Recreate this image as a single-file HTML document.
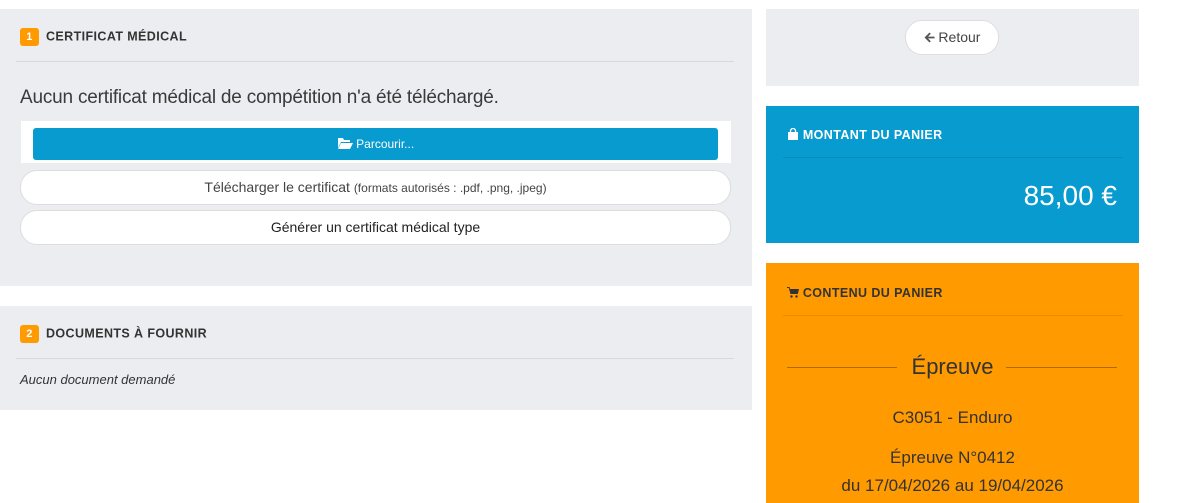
<!DOCTYPE html>
<html><head><meta charset="utf-8"><style>
*{box-sizing:border-box;margin:0;padding:0}
body{width:1202px;height:495px;overflow:hidden;background:#fff;font-family:"Liberation Sans",sans-serif;position:relative;color:#333}
.box{position:absolute;background:#ecedf1}
.h{position:absolute;font-weight:bold;font-size:12.5px;letter-spacing:.4px;color:#333}
.num{display:inline-block;width:19px;height:18px;background:#ff9a00;color:#fff;border-radius:3px;text-align:center;line-height:18px;font-size:11px;margin-right:7px;vertical-align:middle}
.line{position:absolute;height:1px;background:#d8d9dd}
.btn{position:absolute;background:#fff;border:1px solid #ddd;border-radius:17px;text-align:center;font-size:14px;color:#444}
svg{vertical-align:-1px}
</style></head><body>
<div class="box" style="left:0;top:9px;width:752px;height:277px"></div>
<div class="h" style="left:20px;top:28px"><span class="num">1</span>CERTIFICAT MÉDICAL</div>
<div class="line" style="left:16px;top:61px;width:718px"></div>
<div style="position:absolute;left:20px;top:87px;font-size:19px;color:#3a3a3a;letter-spacing:-.2px">Aucun certificat médical de compétition n'a été téléchargé.</div>
<div style="position:absolute;left:21px;top:121px;width:710px;height:42px;background:#fff"></div>
<div style="position:absolute;left:33px;top:128px;width:685px;height:32px;background:#089bd0;border-radius:3px;color:#fff;font-size:12px;text-align:center;line-height:32px"><svg width="16" height="12" viewBox="0 0 16 12"><path d="M1 1h5l1 2h6v2H4L1 11z" fill="#fff"/><path d="M4 6h12l-3 6H1z" fill="#fff"/></svg> Parcourir...</div>
<div class="btn" style="left:20px;top:170px;width:711px;height:35px;line-height:33px">Télécharger le certificat <span style="font-size:12px">(formats autorisés : .pdf, .png, .jpeg)</span></div>
<div class="btn" style="left:20px;top:210px;width:711px;height:35px;line-height:33px;color:#222">Générer un certificat médical type</div>

<div class="box" style="left:0;top:306px;width:752px;height:104px"></div>
<div class="h" style="left:20px;top:325px"><span class="num">2</span>DOCUMENTS À FOURNIR</div>
<div class="line" style="left:16px;top:358px;width:718px"></div>
<div style="position:absolute;left:20px;top:372px;font-size:13px;font-style:italic">Aucun document demandé</div>

<div class="box" style="left:766px;top:9px;width:373px;height:77px"></div>
<div class="btn" style="left:905px;top:20px;width:94px;height:35px;line-height:33px"><svg width="11" height="11" viewBox="0 0 11 11"><path d="M5.5 0.5L0.5 5.5l5 5 1.3-1.3L4 6.4h6.5V4.6H4l2.8-2.8z" fill="#555"/></svg> Retour</div>

<div style="position:absolute;left:766px;top:106px;width:373px;height:137px;background:#089bd0"></div>
<div class="h" style="left:787px;top:128px;color:#fff"><svg width="12" height="12" viewBox="0 0 12 12"><path d="M3.5 4V3a2.5 2.5 0 015 0v1" stroke="#fff" stroke-width="1.3" fill="none"/><path d="M1 4h10v8H1z" fill="#fff"/></svg> MONTANT DU PANIER</div>
<div class="line" style="left:783px;top:157px;width:340px;background:#0a8bbb"></div>
<div style="position:absolute;right:85px;top:180px;font-size:28px;color:#fff">85,00 €</div>

<div style="position:absolute;left:766px;top:263px;width:373px;height:240px;background:#ff9a00"></div>
<div class="h" style="left:787px;top:286px;color:#333"><svg width="12" height="11" viewBox="0 0 12 11"><path d="M0 0h2.5l.5 2H12l-1.2 5H3.5L1.8 1H0z" fill="#333"/><circle cx="4.5" cy="9.5" r="1.2" fill="#333"/><circle cx="9.5" cy="9.5" r="1.2" fill="#333"/></svg> CONTENU DU PANIER</div>
<div class="line" style="left:783px;top:315px;width:340px;background:#e88c00"></div>
<div class="line" style="left:787px;top:367px;width:110px;background:#b06a00"></div>
<div class="line" style="left:1006px;top:367px;width:111px;background:#b06a00"></div>
<div style="position:absolute;left:766px;width:373px;text-align:center;top:354px;font-size:22px;color:#333">Épreuve</div>
<div style="position:absolute;left:766px;width:373px;text-align:center;top:408px;font-size:17px;color:#333">C3051 - Enduro</div>
<div style="position:absolute;left:766px;width:373px;text-align:center;top:444px;font-size:17px;color:#333;line-height:28px">Épreuve N°0412<br>du 17/04/2026 au 19/04/2026</div>
</body></html>
